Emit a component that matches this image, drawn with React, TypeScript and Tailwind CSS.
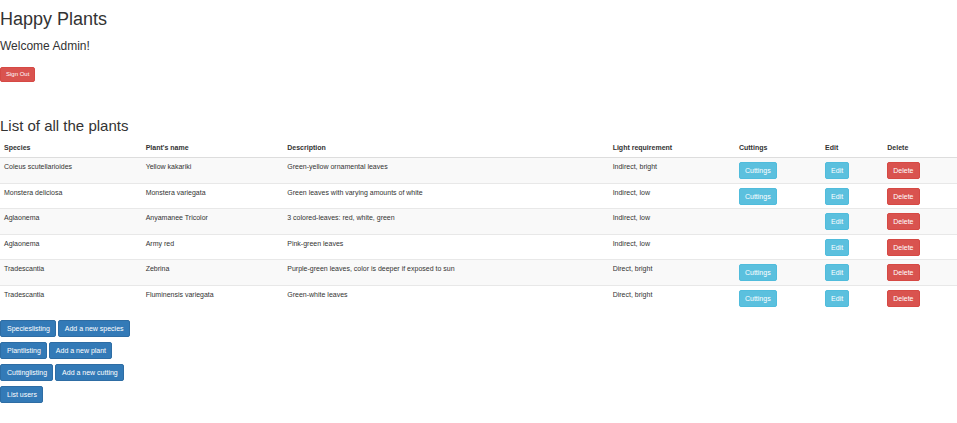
import type { ReactNode } from "react";

type Plant = {
  species: string;
  name: string;
  description: string;
  light: string;
  cuttings: boolean;
};

const plants: Plant[] = [
  { species: "Coleus scutellarioides", name: "Yellow kakariki", description: "Green-yellow ornamental leaves", light: "Indirect, bright", cuttings: true },
  { species: "Monstera deliciosa", name: "Monstera variegata", description: "Green leaves with varying amounts of white", light: "Indirect, low", cuttings: true },
  { species: "Aglaonema", name: "Anyamanee Tricolor", description: "3 colored-leaves: red, white, green", light: "Indirect, low", cuttings: false },
  { species: "Aglaonema", name: "Army red", description: "Pink-green leaves", light: "Indirect, low", cuttings: false },
  { species: "Tradescantia", name: "Zebrina", description: "Purple-green leaves, color is deeper if exposed to sun", light: "Direct, bright", cuttings: true },
  { species: "Tradescantia", name: "Fluminensis variegata", description: "Green-white leaves", light: "Direct, bright", cuttings: true },
];

const columns = [
  { label: "Species", width: "w-[14.8%]" },
  { label: "Plant's name", width: "w-[14.8%]" },
  { label: "Description", width: "w-[34%]" },
  { label: "Light requirement", width: "w-[13.2%]" },
  { label: "Cuttings", width: "w-[9%]" },
  { label: "Edit", width: "w-[6.5%]" },
  { label: "Delete", width: "w-[7.7%]" },
];

const linkRows = [
  ["Specieslisting", "Add a new species"],
  ["Plantlisting", "Add a new plant"],
  ["Cuttinglisting", "Add a new cutting"],
  ["List users"],
];

const tones = {
  info: "border-[#50bcdc] bg-[#5bc0de]",
  danger: "border-[#d64944] bg-[#d9534f]",
};

function RowButton({ tone, children }: { tone: keyof typeof tones; children: ReactNode }) {
  return (
    <button
      type="button"
      className={`block h-[17px] rounded-[2px] border px-[5px] text-[7px] leading-[15px] text-white ${tones[tone]}`}
    >
      {children}
    </button>
  );
}

export default function App() {
  return (
    <main className="bg-white pt-[9px] pb-5 font-['Liberation_Sans',Arial,sans-serif] text-[7px] leading-[10px] text-[#333]">
      <h1 className="text-[18px] leading-5">Happy Plants</h1>
      <h3 className="mt-[9px] text-[12px] leading-4">Welcome Admin!</h3>
      <button
        type="button"
        className="mt-[13px] block h-[15px] rounded-[2px] border border-[#d64944] bg-[#d9534f] px-[5px] text-[6px] leading-[13px] text-white"
      >
        Sign Out
      </button>

      <h2 className="mt-[34px] text-[15px] leading-5">List of all the plants</h2>
      <table className="mt-[3px] w-full table-fixed border-separate border-spacing-0 text-left">
        <thead>
          <tr>
            {columns.map((column) => (
              <th
                key={column.label}
                scope="col"
                className={`border-b border-[#ddd] px-1 pt-1 pb-1 font-bold ${column.width}`}
              >
                {column.label}
              </th>
            ))}
          </tr>
        </thead>
        <tbody className="[&_td]:border-b [&_td]:border-[#e8e8e8] [&_td]:px-1 [&_td]:pt-1 [&_td]:align-top [&>tr:last-child>td]:border-b-0 [&>tr:nth-child(even)>td]:pb-[3px] [&>tr:nth-child(odd)]:bg-[#f9f9f9] [&>tr:nth-child(odd)>td]:pb-1">
          {plants.map((plant) => (
            <tr key={plant.name}>
              <td>{plant.species}</td>
              <td>{plant.name}</td>
              <td>{plant.description}</td>
              <td>{plant.light}</td>
              <td>{plant.cuttings && <RowButton tone="info">Cuttings</RowButton>}</td>
              <td>
                <RowButton tone="info">Edit</RowButton>
              </td>
              <td>
                <RowButton tone="danger">Delete</RowButton>
              </td>
            </tr>
          ))}
        </tbody>
      </table>

      <nav className="mt-2.5 flex flex-col gap-[5px]">
        {linkRows.map((row) => (
          <div key={row[0]} className="flex gap-0.5">
            {row.map((label) => (
              <a
                key={label}
                href="#"
                className="block h-[17px] rounded-[2px] border border-[#2e6da4] bg-[#337ab7] pr-[5px] pl-1.5 leading-[15px] text-white"
              >
                {label}
              </a>
            ))}
          </div>
        ))}
      </nav>
    </main>
  );
}
